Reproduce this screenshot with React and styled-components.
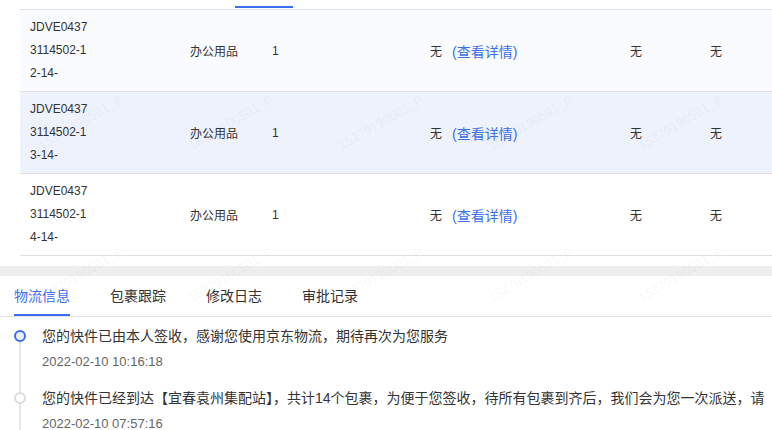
import React from 'react';
import styled, { createGlobalStyle } from 'styled-components';

const GlobalStyle = createGlobalStyle`
  html, body {
    margin: 0;
    padding: 0;
    background: #fff;
  }
  body {
    font-family: "Liberation Sans", "Noto Sans CJK SC", sans-serif;
    color: #333;
  }
`;

const Page = styled.div`
  position: relative;
  width: 772px;
  height: 430px;
  overflow: hidden;
  background: #fff;
`;

const TopStrip = styled.div`
  height: 9px;
  padding: 6px 0 0 235px;
  box-sizing: border-box;
`;

const InkBar = styled.div`
  width: 58px;
  height: 2px;
  background: #3b6ef3;
`;

const Table = styled.div`
  margin-left: 20px;
  border-top: 1px solid #dfdfdf;
`;

const Row = styled.div`
  display: grid;
  grid-template-columns: 160px 82px 158px 200px 80px 1fr;
  height: 81px;
  border-bottom: 1px solid #dfdfdf;
  background: ${p => p.$bg};
  font-size: 12px;
`;

const Cell = styled.div`
  display: flex;
  align-items: center;
  padding-left: 10px;
  white-space: nowrap;
`;

const CodeText = styled.div`
  width: 62px;
  line-height: 23px;
  word-break: break-all;
  white-space: normal;
`;

const Link = styled.span`
  margin-left: 10px;
  font-size: 14px;
  color: #3b6ef0;
  cursor: pointer;
`;

const Spacer = styled.div`
  height: 10px;
`;

const Band = styled.div`
  height: 10px;
  background: #eeeeee;
`;

const TabBar = styled.div`
  display: flex;
  gap: 40px;
  height: 40px;
  padding-left: 14px;
  border-bottom: 1px solid #e4e4e4;
`;

const Tab = styled.div`
  position: relative;
  width: 56px;
  font-size: 14px;
  line-height: 40px;
  color: ${p => (p.$active ? '#3b6ef3' : '#333')};

  &::after {
    content: '';
    display: ${p => (p.$active ? 'block' : 'none')};
    position: absolute;
    left: 0;
    right: 0;
    bottom: 0;
    height: 2px;
    background: #3b6ef3;
  }
`;

const Timeline = styled.div`
  padding-top: 7px;
`;

const Item = styled.div`
  display: flex;
`;

const Rail = styled.div`
  flex: 0 0 40px;
  display: flex;
  flex-direction: column;
  align-items: center;
`;

const Stub = styled.div`
  width: 2px;
  height: 6px;
  background: ${p => (p.$hidden ? 'transparent' : '#e6e6e6')};
`;

const Dot = styled.div`
  width: 12px;
  height: 12px;
  flex-shrink: 0;
  box-sizing: border-box;
  border-radius: 50%;
  border: 2px solid ${p => (p.$active ? '#3b6ef3' : '#dcdcdc')};
  background: ${p => (p.$active ? '#e9effd' : '#fff')};
`;

const Tail = styled.div`
  flex: 1;
  width: 2px;
  background: #e6e6e6;
`;

const Body = styled.div`
  flex: 1;
  min-width: 0;
  margin-left: 2px;
  padding-bottom: 12px;
`;

const Message = styled.div`
  font-size: 14px;
  line-height: 24px;
  color: #333;
  white-space: nowrap;
  overflow: hidden;
`;

const Time = styled.div`
  margin-top: 2px;
  font-size: 13px;
  line-height: 24px;
  color: #666;
`;

const WatermarkLayer = styled.div`
  position: absolute;
  left: 6px;
  top: 46px;
  display: grid;
  grid-template-columns: repeat(5, 150px);
  grid-auto-rows: 152px;
  pointer-events: none;
`;

const WatermarkCell = styled.div`
  display: flex;
  align-items: center;
  justify-content: center;
`;

const WatermarkText = styled.span`
  font-size: 13px;
  color: rgba(0, 0, 0, 0.05);
  transform: rotate(-30deg);
  white-space: nowrap;
`;

const rows = [
  { code: 'JDVE04373114502-12-14-', bg: '#fafbfe' },
  { code: 'JDVE04373114502-13-14-', bg: '#eef2fd' },
  { code: 'JDVE04373114502-14-14-', bg: '#fff' },
];

const tabs = ['物流信息', '包裹跟踪', '修改日志', '审批记录'];

const events = [
  {
    text: '您的快件已由本人签收，感谢您使用京东物流，期待再次为您服务',
    time: '2022-02-10 10:16:18',
  },
  {
    text: '您的快件已经到达【宜春袁州集配站】，共计14个包裹，为便于您签收，待所有包裹到齐后，我们会为您一次派送，请',
    time: '2022-02-10 07:57:16',
  },
];

export default function App() {
  return (
    <Page>
      <GlobalStyle />
      <TopStrip>
        <InkBar />
      </TopStrip>
      <Table>
        {rows.map(r => (
          <Row key={r.code} $bg={r.bg}>
            <Cell>
              <CodeText>{r.code}</CodeText>
            </Cell>
            <Cell>办公用品</Cell>
            <Cell>1</Cell>
            <Cell>
              无<Link>(查看详情)</Link>
            </Cell>
            <Cell>无</Cell>
            <Cell>无</Cell>
          </Row>
        ))}
      </Table>
      <Spacer />
      <Band />
      <TabBar>
        {tabs.map((t, i) => (
          <Tab key={t} $active={i === 0}>{t}</Tab>
        ))}
      </TabBar>
      <Timeline>
        {events.map((e, i) => (
          <Item key={e.time}>
            <Rail>
              <Stub $hidden={i === 0} />
              <Dot $active={i === 0} />
              <Tail />
            </Rail>
            <Body>
              <Message>{e.text}</Message>
              <Time>{e.time}</Time>
            </Body>
          </Item>
        ))}
      </Timeline>
      <WatermarkLayer>
        {Array.from({ length: 10 }).map((_, i) => (
          <WatermarkCell key={i}>
            <WatermarkText>15279190501_P</WatermarkText>
          </WatermarkCell>
        ))}
      </WatermarkLayer>
    </Page>
  );
}
